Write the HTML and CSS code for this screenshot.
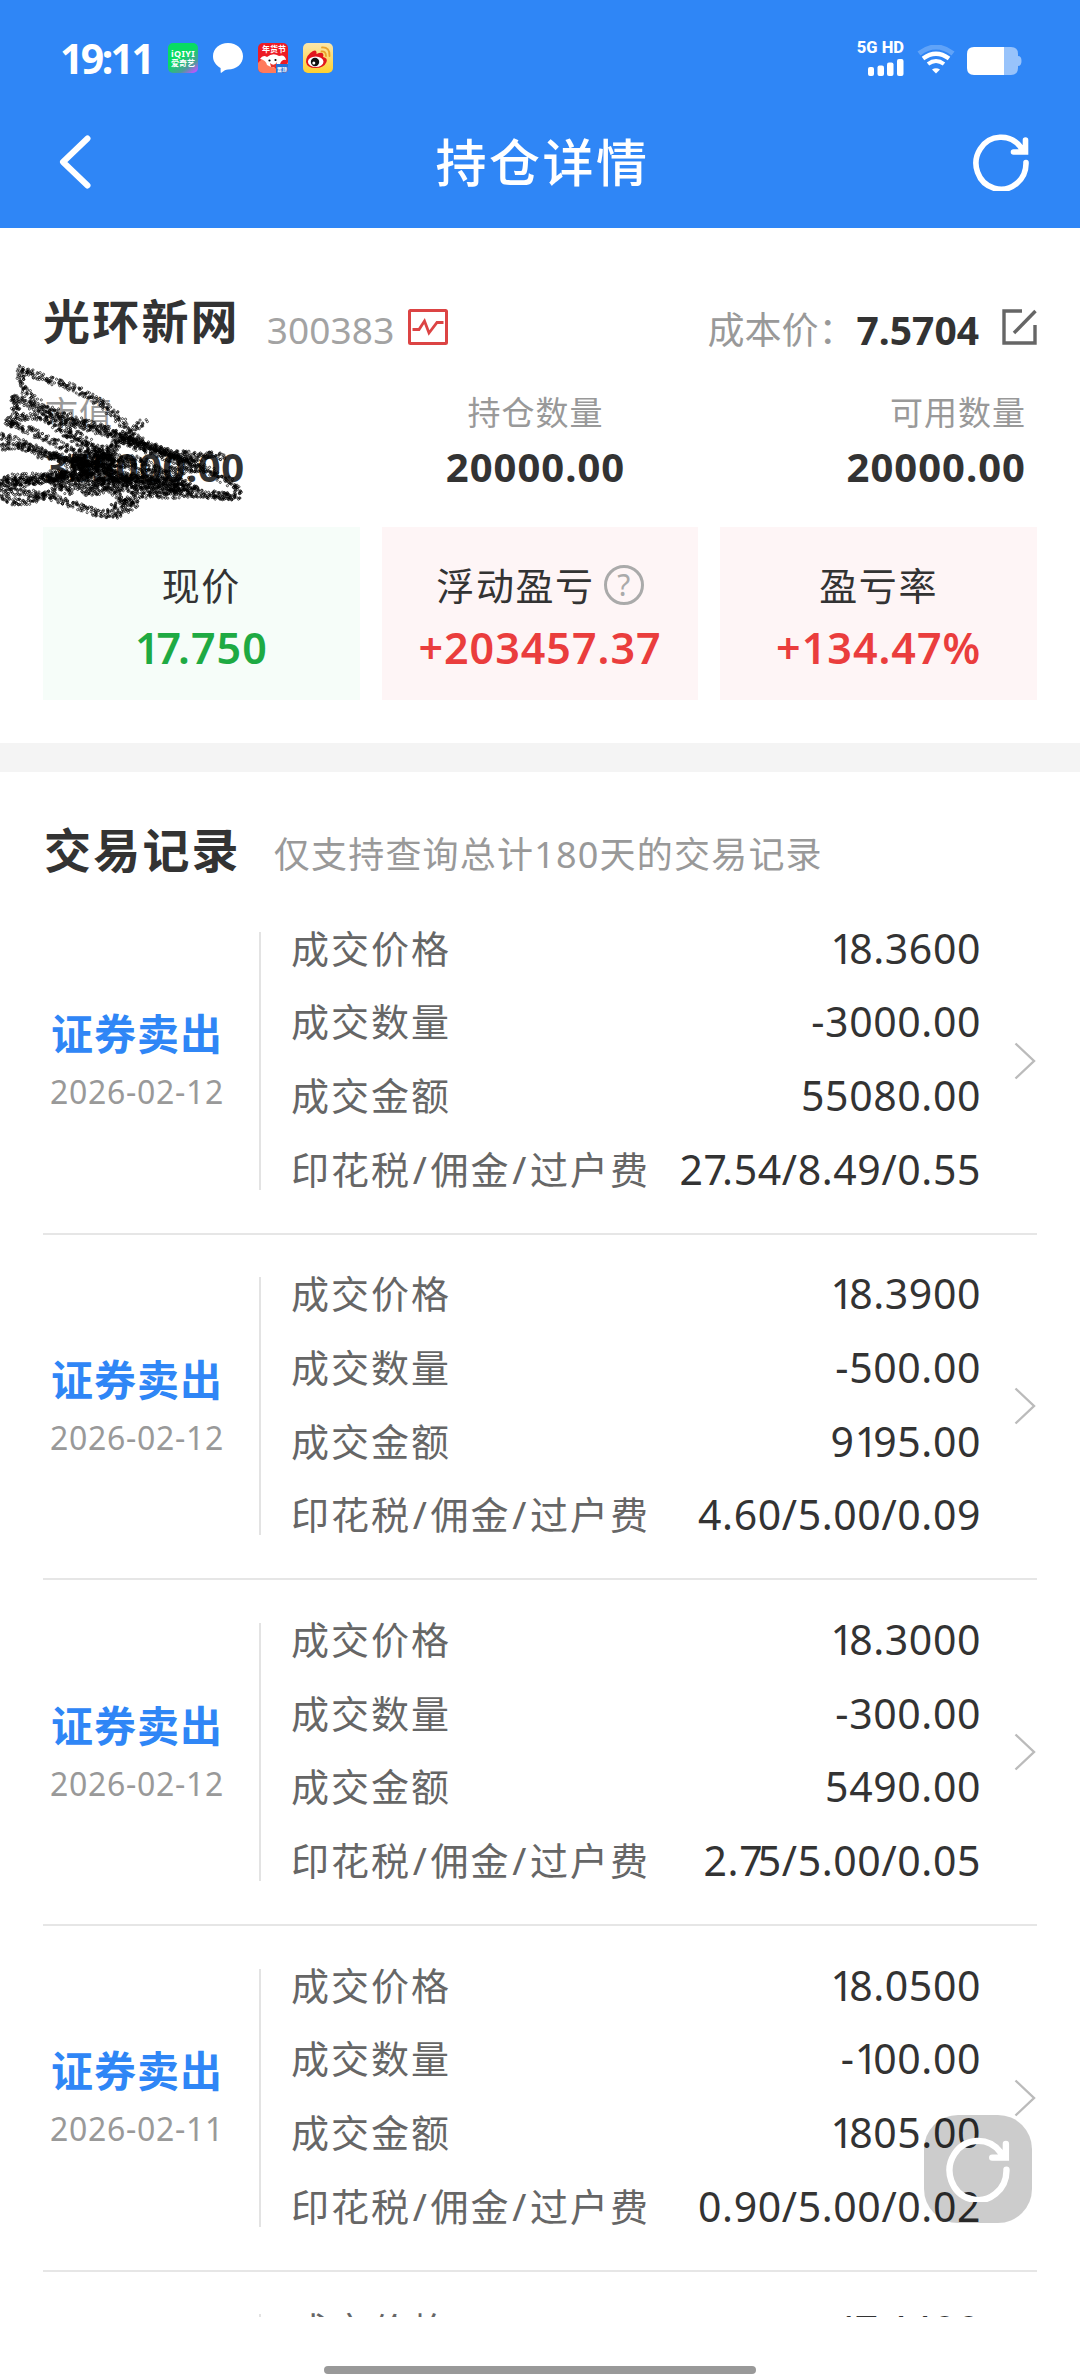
FILE: index.html
```html
<!DOCTYPE html>
<html lang="zh-CN">
<head>
<meta charset="utf-8">
<title>持仓详情</title>
<link rel="stylesheet" href="styles.css">
</head>
<body>
<svg class="defs" width="0" height="0" aria-hidden="true">
  <symbol id="refresh" viewBox="0 0 56 58">
    <path d="M53 29.500A25 26 0 1 1 47.500 14L51 18.500M52.500 7V19H40.500" fill="none" stroke="currentColor" stroke-width="5.600" stroke-linecap="round"/>
  </symbol>
  <symbol id="chevron" viewBox="0 0 22 38">
    <path d="M1.500 1.500L20 19L1.500 36.500" fill="none" stroke="currentColor" stroke-width="2.400"/>
  </symbol>
</svg>
<div class="screen">
  <header class="header">
    <div class="status">
      <div class="status-left">
        <span class="time">19:11</span>
        <span class="app iqiyi"><b>iQIYI</b><i>爱奇艺</i></span>
        <svg class="app" viewBox="0 0 30 30"><path d="M15 0C23.500 0 30 5.500 30 13.300S23.500 26.500 15 26.500C13 26.500 11 27.500 8 30Q7.500 30 7.600 25C3 22.500 0 18.500 0 13.300C0 5.500 6.500 0 15 0Z" fill="#fff"/></svg>
        <span class="app fest"><svg viewBox="0 0 30 30"><path d="M0 20Q8 10 15 22T30 19V30H0Z" fill="#ff7a5c"/><path d="M2 16Q5 11 9 14Q15 9 21 13Q27 11 28 17Q24 16 22 21Q17 27 9 22Q8 17 2 16Z" fill="#fff"/><circle cx="11.500" cy="17.500" r="1.100"/><circle cx="17.500" cy="17" r="1.100"/><path d="M12 20Q16 24 19 19L18 24H13Z" fill="#e5332c"/><path d="M18 21H30V30H18Z" fill="#2672d8"/></svg><i>年货节</i><b>置顶</b></span>
        <svg class="app" viewBox="0 0 30 30"><defs><linearGradient id="wb" x2="0" y2="1"><stop stop-color="#f9e6ad"/><stop offset="1" stop-color="#ffd02e"/></linearGradient></defs><rect width="30" height="30" rx="5" fill="url(#wb)"/><path d="M3 19Q3 12 10 8Q14 6 13.500 11Q20 8 20.500 12Q20 14 20 14Q25 15 23.500 19Q21 25 12.500 25Q4 25 3 19Z" fill="#e1161d"/><ellipse cx="12.700" cy="18.700" rx="7.800" ry="5.200" fill="#fff"/><circle cx="12" cy="19" r="4.200" fill="#111"/><circle cx="10.800" cy="20" r="1.500" fill="#fff"/><path d="M18.500 8.500Q23 8 23 13M19 4.500Q27 4 26.500 13" fill="none" stroke="#e9a22b" stroke-width="1.800" stroke-linecap="round"/></svg>
      </div>
      <div class="status-right">
        <div class="cell">
          <span class="net">5G HD</span>
          <svg width="36" height="17" viewBox="0 0 36 17" fill="#fff"><rect y="8" width="6" height="9" rx="2"/><rect x="9.500" y="6.500" width="6.500" height="10.500" rx="2"/><rect x="19" y="3.500" width="6.500" height="13.500" rx="2"/><rect x="29" y="0" width="6.500" height="17" rx="2"/></svg>
        </div>
        <svg class="wifi" width="38" height="30" viewBox="0 0 38 30" fill="none" stroke="#fff"><path d="M2 8.500Q19 -4.500 36 8.500" stroke-width="5" opacity=".24"/><path d="M6 13.500Q19 4 32 13.500" stroke-width="4.200"/><path d="M11 19Q19 13 27 19" stroke-width="4"/><path d="M15 24.500Q19 22 23 24.500L19 28.500Z" fill="#fff" stroke="none"/></svg>
        <svg width="55" height="28" viewBox="0 0 55 28"><path d="M37 0H44Q51 0 51 7V9Q54.500 9 54.500 14T51 19V21Q51 28 44 28H37Z" fill="#98c3fb"/><path d="M7 0H37V28H7Q0 28 0 21V7Q0 0 7 0Z" fill="#fff"/></svg>
      </div>
    </div>
    <nav class="nav">
      <svg class="back" width="32" height="54" viewBox="0 0 32 54"><path d="M28.500 3.500L4 27L28.500 50.500" fill="none" stroke="#fff" stroke-width="6" stroke-linecap="round" stroke-linejoin="round"/></svg>
      <h1>持仓详情</h1>
      <svg class="reload" width="56" height="58"><use href="#refresh"/></svg>
    </nav>
  </header>

  <section class="summary">
    <div class="stock">
      <h2>光环新网</h2>
      <span class="code">300383</span>
      <svg class="chart" width="40" height="36" viewBox="0 0 40 36" fill="none" stroke="#dc4444"><rect x="1.500" y="1.500" width="37" height="33" rx="1" stroke-width="3"/><path d="M4.500 20.500H11L16.500 12L21 24L29 13.500H35.500" stroke-width="2.800"/></svg>
      <span class="cost-label">成本价：</span>
      <b class="cost">7.5704</b>
      <svg width="35" height="36" viewBox="0 0 35 36" fill="none" stroke="#666" stroke-width="3.400"><path d="M20 2H2V34H33V16"/><path d="M12 24L33.500 2"/></svg>
    </div>
    <div class="holding">
      <div class="col first"><span>市值</span><b>355000.00</b></div>
      <div class="col mid"><span>持仓数量</span><b>20000.00</b></div>
      <div class="col last"><span>可用数量</span><b>20000.00</b></div>
      <svg class="scribble" width="260" height="170" viewBox="0 0 768 502">
        <g fill="none">
          <path d="M62 35L60 80L75 105L130 155L230 190L360 235L450 270L540 300L600 330L640 352L700 385L705 410L690 418L620 408"/>
          <path d="M62 38L130 65L220 95L310 145L350 185L385 220"/>
          <path d="M425 195L385 232L310 275L240 300"/>
          <path d="M45 120L40 145L50 165L25 190L30 205L60 180L130 180L160 200L200 240L290 285"/>
          <path d="M35 130L50 122L120 165L160 180L260 210L370 245L500 290L560 320"/>
          <path d="M28 200L100 225L150 250L230 285L330 300L440 310"/>
          <path d="M0 235L80 265L150 290L230 310L330 330"/>
          <path d="M0 270L60 262L120 290L200 310L300 320"/>
          <path d="M180 190L230 235L300 285L340 310"/>
          <path d="M0 360L100 355L190 345L280 310L370 245"/>
          <path d="M0 378L100 370L200 360L300 340L350 320"/>
          <path d="M0 372L60 380L130 362L220 350"/>
          <path d="M0 415L50 432L100 425L130 410L200 435L290 465L350 470L400 435L370 425L320 460"/>
          <path d="M0 400L60 400L130 410L200 375L250 370"/>
          <path d="M250 402L330 395L430 395L500 400L600 412L690 415"/>
          <path d="M250 405L300 370L400 360L500 370L590 400"/>
          <path d="M380 235L470 280L540 292L600 290L660 297"/>
          <path d="M150 365L200 400L260 370L330 390L370 430L420 410L520 410"/>
          <path d="M200 320L300 310L420 330L540 340L600 330"/>
          <path d="M220 340L350 350L450 370L560 385"/>
          <path d="M230 290L250 350L330 290L340 370L420 380L530 390"/>
          <path d="M360 240L380 260L440 280L520 310L590 320"/>
          <path d="M200 300L290 330L370 380L460 380L580 395"/>
          <path d="M170 350L260 350L290 370L360 370L440 345L500 355L550 370"/>
        </g>
        <path class="ink" d=""/>
      </svg>
    </div>
    <div class="cards">
      <div class="card green"><span>现价</span><b><i>1</i><i>7</i>.750</b></div>
      <div class="card red"><span>浮动盈亏<em>?</em></span><b>+203457.37</b></div>
      <div class="card red"><span>盈亏率</span><b>+134.47%</b></div>
    </div>
  </section>

  <section class="records">
    <div class="records-head"><h2>交易记录</h2><span>仅支持查询总计180天的交易记录</span></div>
    <article class="record">
      <div class="kind"><b>证券卖出</b><time>2026-02-12</time></div>
      <dl>
        <div><dt>成交价格</dt><dd><i>1</i>8.3600</dd></div>
        <div><dt>成交数量</dt><dd>-3000.00</dd></div>
        <div><dt>成交金额</dt><dd>55080.00</dd></div>
        <div><dt>印花税<i>/</i>佣金<i>/</i>过户费</dt><dd>2<i>7</i>.54/8.49/0.55</dd></div>
      </dl>
      <svg class="go" width="22" height="38"><use href="#chevron"/></svg>
    </article>
    <article class="record">
      <div class="kind"><b>证券卖出</b><time>2026-02-12</time></div>
      <dl>
        <div><dt>成交价格</dt><dd><i>1</i>8.3900</dd></div>
        <div><dt>成交数量</dt><dd>-500.00</dd></div>
        <div><dt>成交金额</dt><dd>9<i>1</i>95.00</dd></div>
        <div><dt>印花税<i>/</i>佣金<i>/</i>过户费</dt><dd>4.60/5.00/0.09</dd></div>
      </dl>
      <svg class="go" width="22" height="38"><use href="#chevron"/></svg>
    </article>
    <article class="record">
      <div class="kind"><b>证券卖出</b><time>2026-02-12</time></div>
      <dl>
        <div><dt>成交价格</dt><dd><i>1</i>8.3000</dd></div>
        <div><dt>成交数量</dt><dd>-300.00</dd></div>
        <div><dt>成交金额</dt><dd>5490.00</dd></div>
        <div><dt>印花税<i>/</i>佣金<i>/</i>过户费</dt><dd>2.<i>7</i>5/5.00/0.05</dd></div>
      </dl>
      <svg class="go" width="22" height="38"><use href="#chevron"/></svg>
    </article>
    <article class="record">
      <div class="kind"><b>证券卖出</b><time>2026-02-11</time></div>
      <dl>
        <div><dt>成交价格</dt><dd><i>1</i>8.0500</dd></div>
        <div><dt>成交数量</dt><dd>-<i>1</i>00.00</dd></div>
        <div><dt>成交金额</dt><dd><i>1</i>805.00</dd></div>
        <div><dt>印花税<i>/</i>佣金<i>/</i>过户费</dt><dd>0.90/5.00/0.02</dd></div>
      </dl>
      <svg class="go" width="22" height="38"><use href="#chevron"/></svg>
    </article>
    <article class="record">
      <div class="kind"></div>
      <dl>
        <div><dt>成交价格</dt><dd><i>1</i><i>7</i>.4400</dd></div>
      </dl>
    </article>
  </section>
  <footer class="gesture"><span></span></footer>
  <div class="float"><svg width="66" height="66"><use href="#refresh"/></svg></div>
</div>
<script src="scribble.js"></script>
</body>
</html>
```
FILE: styles.css
```css
* { box-sizing: border-box; margin: 0; padding: 0; }
body { background: #fff; }
i, em { font-style: normal; }
.defs { position: absolute; }

.screen {
  position: relative;
  width: 1080px;
  height: 2376px;
  display: flex;
  flex-direction: column;
  overflow: hidden;
  font-family: "Noto Sans", "Noto Sans CJK SC", sans-serif;
  color: #333;
  white-space: nowrap;
}

/* header */
.header { height: 228px; background: #2f86f6; color: #fff; padding-top: 38px; }
.status { display: flex; justify-content: space-between; height: 40px; padding: 0 58px 0 60px; }
.status-left { display: flex; align-items: center; gap: 15px; }
.time { width: 93px; font-size: 41px; line-height: 40px; font-weight: 700; letter-spacing: -2.600px; }
.app { width: 30px; height: 30px; flex: none; }
.iqiyi {
  display: flex; flex-direction: column; align-items: center; justify-content: center;
  border-radius: 5px;
  background: linear-gradient(145deg, #08dc62 45%, #4e9b9b 75%, #b35cf5 92%);
}
.iqiyi b { font-size: 9px; line-height: 9px; letter-spacing: .3px; }
.iqiyi i { font-size: 8px; line-height: 9px; font-weight: 700; }
.fest { position: relative; background: #ed1b24; border-radius: 5px; overflow: hidden; }
.fest svg { display: block; width: 30px; height: 30px; }
.fest i { position: absolute; left: 4px; top: 1px; font-size: 8px; line-height: 10px; font-weight: 700; }
.fest b { position: absolute; right: 1px; bottom: 1px; font-size: 5px; line-height: 6px; }
.status-right { display: flex; align-items: flex-start; gap: 13px; padding-top: 9px; }
.cell { display: flex; flex-direction: column; align-items: flex-end; margin-top: -7px; }
.net { font-family: Roboto, sans-serif; font-size: 16.5px; line-height: 16px; font-weight: 800; letter-spacing: 0; margin-bottom: 3px; }
.wifi { margin-top: -2px; margin-right: -1px; }
.nav { display: flex; align-items: center; justify-content: space-between; height: 66px; margin-top: 51px; padding: 0 51px 0 59px; }
.nav h1 { font-size: 51px; line-height: 60px; font-weight: 500; letter-spacing: 2.500px; font-family: "Noto Sans CJK SC", sans-serif; margin: -4px 0 0 21px; }

/* position summary */
.summary { height: 544px; padding: 69px 43px 0; border-bottom: 29px solid #f4f4f4; }
.stock { display: flex; align-items: center; height: 60px; }
.stock h2, .records-head h2 { font-size: 47px; line-height: 56px; font-weight: 700; letter-spacing: 2.200px; }
.stock h2 { margin-top: -12px; }
.code { margin-left: 27px; font-size: 37px; line-height: 40px; letter-spacing: .1px; color: #a3a3a3; margin-top: 6px; width: 141px; }
.cost-label { margin-left: auto; font-size: 37px; line-height: 40px; color: #999; margin-top: 5px; }
.cost { margin: 6px 23px 0 1px; font-size: 39px; line-height: 40px; }
.holding { position: relative; display: grid; grid-template-columns: 1fr 1fr 1fr; height: 170px; padding: 36px 11px 0 2px; }
.col { display: flex; flex-direction: column; gap: 14px; }
.col span { font-size: 33px; line-height: 40px; letter-spacing: 1px; color: #999; }
.col b { font-size: 40px; line-height: 40px; letter-spacing: 1px; font-weight: 700; }
.first b { letter-spacing: .6px; }
.mid { align-items: center; }
.last { align-items: flex-end; }
.scribble { position: absolute; left: -43px; top: -1px; }
.ink { fill: none; stroke: #000; stroke-width: 2.200; opacity: .9; }
.cards { display: grid; grid-template-columns: 1fr 1fr 1fr; gap: 22px; }
.card { display: flex; flex-direction: column; align-items: center; height: 173px; padding-top: 36px; gap: 19px; }
.card span { display: flex; align-items: center; font-size: 38px; line-height: 44px; letter-spacing: 1.600px; }
.card b { font-size: 43px; line-height: 44px; font-weight: 600; letter-spacing: 1px; }
.card b i { margin-right: -4px; }
.card em { width: 40px; height: 40px; margin-left: 9px; border: 3px solid #aaa; border-radius: 50%; color: #aaa; font-size: 30px; line-height: 34px; text-align: center; letter-spacing: 0; }
.green { background: #f6fdf9; }
.green b { color: #1eaa43; }
.red { background: #fef5f6; }
.red b { color: #ea3d3d; }

/* trade records */
.records { height: 1545px; padding: 0 43px; overflow: hidden; }
.records-head { display: flex; align-items: center; height: 117px; padding: 42px 0 0 1px; }
.records-head h2 { margin-top: -4px; }
.records-head span { margin: 6px 0 0 33px; font-size: 36px; line-height: 44px; letter-spacing: 1.200px; color: #999; }
.record { display: flex; align-items: center; height: 345.670px; border-bottom: 2px solid #e6e6e6; }
.kind { width: 216px; padding: 0 28px 0 0; display: flex; flex-direction: column; align-items: center; gap: 13px; }
.kind b { font-size: 42px; line-height: 50px; color: #2f86f6; letter-spacing: 1px; }
.kind time { font-size: 32px; line-height: 40px; color: #999; letter-spacing: .7px; }
.record dl { display: flex; flex-direction: column; justify-content: space-between; width: 722px; height: 258px; border-left: 2px solid #e3e3e3; padding-left: 30px; }
.record dl div { display: flex; justify-content: space-between; height: 37px; line-height: 33px; }
.record dt { font-size: 38px; letter-spacing: 2px; color: #666; }
.record dt i { padding: 0 1.700px; }
.record dd { font-size: 41px; letter-spacing: .6px; }
.record dd i { margin-right: -5.500px; }
.go { margin-left: 33px; color: #bbb; }

.gesture { display: flex; justify-content: center; align-items: flex-end; flex: 1; padding-bottom: 2px; }
.gesture span { width: 432px; height: 8px; border-radius: 4px; background: #999; }
.float { position: absolute; left: 924px; top: 2115px; width: 108px; height: 108px; display: flex; align-items: center; justify-content: center; border-radius: 34px; background: rgba(0, 0, 0, .2); color: #fff; }
```
FILE: scribble.js
```js
// Stipples the pen strokes over the hidden amount with small ink rings.
(function () {
  var svg = document.querySelector('.scribble');
  var seed = 7;
  function rnd() {
    seed = (seed * 16807) % 2147483647;
    return seed / 2147483647 - 0.5;
  }
  var d = '';
  svg.querySelectorAll('g path').forEach(function (p) {
    var len = p.getTotalLength();
    for (var s = 0; s < len; s += 3.6) {
      var pt = p.getPointAtLength(s);
      for (var k = 0; k < 2; k++) {
        var x = pt.x + rnd() * 22, y = pt.y + rnd() * 22, r = 3.2;
        d += 'M' + (x - r).toFixed(1) + ' ' + y.toFixed(1) + 'a3.2 3.2 0 1 0 6.4 0a3.2 3.2 0 1 0 -6.4 0';
      }
    }
  });
  svg.querySelector('.ink').setAttribute('d', d);
})();
```
